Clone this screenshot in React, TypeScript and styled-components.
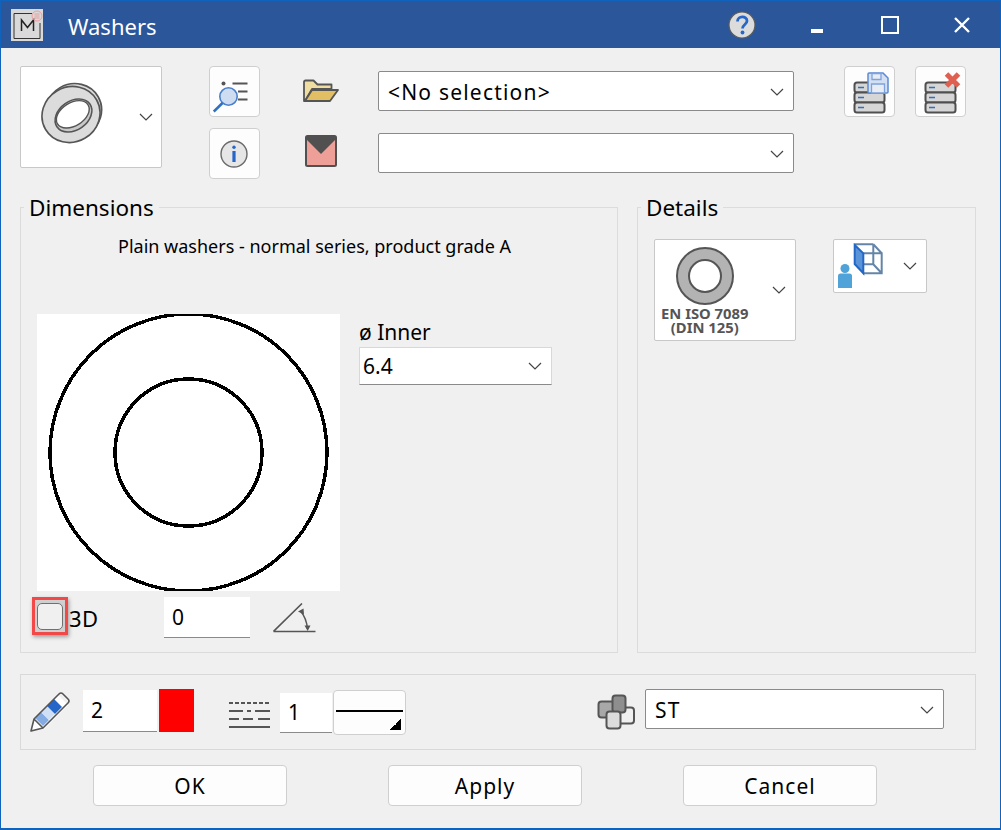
import styled, { createGlobalStyle } from "styled-components";

const GlobalStyle = createGlobalStyle`
  * {
    box-sizing: border-box;
  }
  body {
    margin: 0;
    background: #ffffff;
    font-family: "Noto Sans", "Open Sans", sans-serif;
    color: #000000;
  }
`;

const Chevron = () => (
  <ChevronSvg viewBox="0 0 14 8" fill="none" stroke="#444444" strokeWidth="1.2">
    <path d="M1 1l6 6 6-6" />
  </ChevronSvg>
);

const WasherIcon = () => (
  <svg width="66" height="64" viewBox="0 0 66 64">
    <ellipse cx="33.500" cy="30" rx="28.500" ry="27" transform="rotate(-30 33.500 30)" fill="#dcdcdc" stroke="#555" strokeWidth="1.600" />
    <ellipse cx="31" cy="33.500" rx="29.500" ry="27.500" transform="rotate(-30 31 33.500)" fill="#dcdcdc" stroke="#555" strokeWidth="1.600" />
    <ellipse cx="33.500" cy="34.500" rx="20" ry="14.500" transform="rotate(-35 33.500 34.500)" fill="#c9c9c9" stroke="#555" strokeWidth="1.600" />
    <ellipse cx="32.800" cy="33.300" rx="18" ry="11.500" transform="rotate(-32 32.800 33.300)" fill="#ffffff" stroke="#555" strokeWidth="1.400" />
  </svg>
);

const SearchListIcon = () => (
  <svg width="44" height="44" viewBox="0 0 44 44">
    <circle cx="10.500" cy="13.500" r="2" fill="#555" />
    <path d="M19.500 13.500h15M25 21.500h9.500M25 29.500h9.500" stroke="#555" strokeWidth="2" />
    <circle cx="15.500" cy="26.500" r="8.700" fill="#cddcf1" stroke="#4a7fcb" strokeWidth="1.600" />
    <path d="M9.500 33L0.800 41.500" stroke="#2f6fc4" strokeWidth="2.600" />
  </svg>
);

const InfoIcon = () => (
  <svg width="30" height="30" viewBox="1 0 30 30">
    <circle cx="15" cy="15" r="13" fill="#e6e6e6" stroke="#6a6a6a" strokeWidth="1.400" />
    <rect x="13.300" y="6.500" width="3.400" height="3.400" rx="1.700" fill="#2566c8" />
    <rect x="13.400" y="12" width="3.200" height="11" fill="#2566c8" />
  </svg>
);

const FolderIcon = () => (
  <svg width="38" height="24" viewBox="0 0 38 24">
    <path d="M2 22V3q0-1.500 1.500-1.500h8l4 4h14V10H10L3 22z" fill="#f0dda0" stroke="#555" strokeWidth="1.800" strokeLinejoin="round" />
    <path d="M3 22l7-11h26l-8 11z" fill="#e2bf62" stroke="#555" strokeWidth="1.800" strokeLinejoin="round" />
  </svg>
);

const MailIcon = () => (
  <svg width="32" height="32" viewBox="0 0 32 32">
    <rect x="1" y="1" width="30" height="30" rx="1.500" fill="#ee9f98" stroke="#505050" strokeWidth="2" />
    <path d="M1 1h30v3L16 19 1 4z" fill="#505050" />
  </svg>
);

const StackBase = () => (
  <>
    <rect x="4.500" y="12.500" width="30" height="10" rx="2.500" fill="#d6d6d6" stroke="#4f4f4f" strokeWidth="2" />
    <rect x="4.500" y="22.500" width="30" height="10" rx="2.500" fill="#d6d6d6" stroke="#4f4f4f" strokeWidth="2" />
    <rect x="4.500" y="32.500" width="30" height="10" rx="2.500" fill="#d6d6d6" stroke="#4f4f4f" strokeWidth="2" />
    <path d="M8 17.500h6M8 27.500h6M8 37.500h6" stroke="#2f6fc4" strokeWidth="1.500" />
  </>
);

const DbSaveIcon = () => (
  <svg width="40" height="44" viewBox="0 0 40 44">
    <StackBase />
    <path d="M18 4a1 1 0 0 1 1-1h14l5 5v14a1 1 0 0 1-1 1H19a1 1 0 0 1-1-1z" fill="#d3e0f3" stroke="#5c8ad2" strokeWidth="1.500" />
    <path d="M22 3.500h9v6h-9zM21.500 14h13v9h-13z" fill="#e8edf5" stroke="#7ea3dc" strokeWidth="1.300" />
  </svg>
);

const DbDeleteIcon = () => (
  <svg width="40" height="44" viewBox="0 0 40 44">
    <StackBase />
    <path d="M25.500 4l12 12M37.500 4l-12 12" stroke="#df5f50" strokeWidth="5" />
  </svg>
);

const HelpIcon = () => (
  <svg width="28" height="28" viewBox="0 0 28 28">
    <circle cx="14" cy="14" r="13" fill="#dcdcdc" stroke="#5a5a5a" strokeWidth="1.200" />
    <path d="M9.500 10.500c0-6 9.500-6 9.500-.5 0 3.500-4.500 3.500-4.500 7.500" fill="none" stroke="#2566c8" strokeWidth="2.800" />
    <circle cx="14.500" cy="21.500" r="1.900" fill="#2566c8" />
  </svg>
);

const AppIcon = () => (
  <svg width="32" height="32" viewBox="0 0 32 32">
    <rect width="32" height="32" fill="#d9d9d9" />
    <path d="M3 4.500v25h26" fill="none" stroke="#333" strokeWidth="1" />
    <path d="M3 4.500h18M29 14v15.500" fill="none" stroke="#333" strokeWidth="1" />
    <path d="M10.500 22V11l6 7.500 6-7.500v11" fill="none" stroke="#222" strokeWidth="1.500" />
    <circle cx="26" cy="7" r="5" fill="none" stroke="#ee9c9c" strokeWidth="1" />
    <path d="M23.500 5h5M23.500 7h5M23.500 9h5" stroke="#ee8f8f" strokeWidth="0.800" />
  </svg>
);

const FlatWasherIcon = () => (
  <svg width="60" height="60" viewBox="0 0 60 60">
    <circle cx="30" cy="30" r="28" fill="#b3b3b3" stroke="#555" strokeWidth="2" />
    <circle cx="30" cy="30" r="16" fill="#ffffff" stroke="#555" strokeWidth="2" />
  </svg>
);

const ViewCubeIcon = () => (
  <svg width="46" height="46" viewBox="0 0 46 46">
    <path d="M35.300 1.300H16.700M35.300 1.300v20H16.700M35.300 1.300l8.400 9M35.300 21.300l8.400 9M25.300 10.300h18.400v20H25.300" fill="none" stroke="#6585a8" strokeWidth="2" />
    <path d="M16.700 2l8.600 8.300v20L16.700 21z" fill="#5b93d8" stroke="#2266c6" strokeWidth="2" />
    <circle cx="7" cy="25.500" r="4.500" fill="#4fa3d8" />
    <path d="M0 45V33q0-2.500 2.500-2.500h9q2.500 0 2.500 2.500v12z" fill="#4fa3d8" />
  </svg>
);

const AngleIcon = () => (
  <svg width="44" height="32" viewBox="0 0 44 32">
    <path d="M0.500 28.500L29 0.500M0.500 28.500h42" fill="none" stroke="#555" strokeWidth="1.600" />
    <path d="M27.500 8q6 7 7 18" fill="none" stroke="#555" strokeWidth="1.400" />
    <path d="M25 8.500l5.500-3 .5 6zM31.500 22.500h6l-2.800 5.500z" fill="#555" />
  </svg>
);

const PencilIcon = () => (
  <svg width="42" height="42" viewBox="0 0 42 42">
    <path d="M1 40l3-12L28 4l10 10-24 24z" fill="#ffffff" />
    <path d="M5 27l8 8 6-6-8-8z" fill="#84ace3" />
    <path d="M11 21l8 8 6-6-8-8z" fill="#cfdff5" />
    <path d="M17 15l8 8 7-7-8-8z" fill="#2566c8" />
    <path d="M1 40l3-12L29 3q2-2 4 0l5 5q2 2 0 4L13 37zM4 28l9 9" fill="none" stroke="#555" strokeWidth="1.600" strokeLinejoin="round" />
  </svg>
);

const LineTypesIcon = () => (
  <svg width="41" height="27" viewBox="0 0 41 27">
    <path d="M0 2h41" stroke="#555" strokeWidth="2" strokeDasharray="4 2" />
    <path d="M0 10h14M18 10h4M26 10h15" stroke="#555" strokeWidth="2" />
    <path d="M0 18h10M14 18h10M29 18h12" stroke="#555" strokeWidth="2" />
    <path d="M0 26h41" stroke="#555" strokeWidth="2" />
  </svg>
);

const LayersIcon = () => (
  <svg width="40" height="36" viewBox="0 0 40 36">
    <rect x="1.500" y="7.500" width="22" height="16" rx="3" fill="#a8a8a8" stroke="#555" strokeWidth="2" />
    <rect x="17" y="13.500" width="20" height="16" rx="3" fill="#f0f0f0" stroke="#555" strokeWidth="2" />
    <rect x="15.500" y="1.500" width="13" height="17" rx="3" fill="#8e8e8e" stroke="#555" strokeWidth="2" />
    <rect x="9.500" y="17.500" width="14" height="17" rx="3" fill="#dcdcdc" stroke="#555" strokeWidth="2" />
  </svg>
);

export default function App() {
  return (
    <>
      <GlobalStyle />
      <Frame>
        <TitleBar>
          <AppIcon />
          <Title>Washers</Title>
          <TitleActions>
            <HelpIcon />
            <MinimizeGlyph />
            <MaximizeGlyph />
            <CloseGlyph viewBox="0 0 16 16" stroke="#ffffff" strokeWidth="2.400">
              <path d="M1 1l14 14M15 1L1 15" />
            </CloseGlyph>
          </TitleActions>
        </TitleBar>

        <Content>
          <TopRow>
            <ShapeButton>
              <WasherIcon />
              <Chevron />
            </ShapeButton>
            <ToolColumn>
              <ToolButton><SearchListIcon /></ToolButton>
              <ToolButton><InfoIcon /></ToolButton>
            </ToolColumn>
            <GlyphColumn>
              <FolderIcon />
              <MailIcon />
            </GlyphColumn>
            <SelectColumn>
              <ComboBox $width={416}>
                &lt;No selection&gt;
                <Chevron />
              </ComboBox>
              <ComboBox $width={416}>
                <Chevron />
              </ComboBox>
            </SelectColumn>
            <DbButtons>
              <ToolButton><DbSaveIcon /></ToolButton>
              <ToolButton><DbDeleteIcon /></ToolButton>
            </DbButtons>
          </TopRow>

          <GroupRow>
            <Group>
              <Legend>Dimensions</Legend>
              <Description>Plain washers - normal series, product grade A</Description>
              <DrawingRow>
                <Drawing viewBox="0 0 303 277" fill="none" stroke="#000000" strokeWidth="3.500" shapeRendering="crispEdges">
                  <circle cx="151.500" cy="138.500" r="138.500" />
                  <circle cx="151.500" cy="138.500" r="73.500" />
                </Drawing>
                <InnerField>
                  <FieldLabel>ø Inner</FieldLabel>
                  <SmallCombo>
                    6.4
                    <Chevron />
                  </SmallCombo>
                </InnerField>
              </DrawingRow>
              <OptionsRow>
                <Highlight>
                  <CheckBox />
                </Highlight>
                <CheckLabel>3D</CheckLabel>
                <AngleInput>0</AngleInput>
                <AngleIcon />
              </OptionsRow>
            </Group>

            <Group>
              <Legend>Details</Legend>
              <DetailsRow>
                <NormButton>
                  <NormFigure>
                    <FlatWasherIcon />
                    <NormText>EN ISO 7089<br />(DIN 125)</NormText>
                  </NormFigure>
                  <Chevron />
                </NormButton>
                <ViewButton>
                  <ViewCubeIcon />
                  <Chevron />
                </ViewButton>
              </DetailsRow>
            </Group>
          </GroupRow>

          <AttributesBar>
            <PencilIcon />
            <PenInput>2</PenInput>
            <ColorSwatch />
            <LineTypesSlot><LineTypesIcon /></LineTypesSlot>
            <LineInput>1</LineInput>
            <LineStyleButton>
              <LineSample />
              <LineCorner />
            </LineStyleButton>
            <LayerSlot>
              <LayersIcon />
              <LayerCombo $width={299}>
                ST
                <Chevron />
              </LayerCombo>
            </LayerSlot>
          </AttributesBar>

          <ActionRow>
            <ActionButton>OK</ActionButton>
            <ActionButton>Apply</ActionButton>
            <ActionButton>Cancel</ActionButton>
          </ActionRow>
        </Content>
      </Frame>
    </>
  );
}

const Frame = styled.div`
  width: 1001px;
  height: 830px;
  background: #f0f0f0;
  border: solid #0f63bd;
  border-width: 1px 1px 2px 1px;
  display: flex;
  flex-direction: column;
  overflow: hidden;
`;

const TitleBar = styled.div`
  height: 47px;
  flex: none;
  background: #2b579a;
  display: flex;
  align-items: center;
  padding: 0 30px 0 10px;
`;

const Title = styled.div`
  margin: 2px 0 0 25px;
  color: #ffffff;
  font-size: 22px;
`;

const TitleActions = styled.div`
  margin-left: auto;
  display: flex;
  align-items: center;
`;

const MinimizeGlyph = styled.div`
  width: 12px;
  height: 4px;
  margin: 13px 0 0 55px;
  background: #ffffff;
`;

const MaximizeGlyph = styled.div`
  width: 18px;
  height: 18px;
  margin-left: 58px;
  border: 2px solid #ffffff;
`;

const CloseGlyph = styled.svg`
  width: 16px;
  height: 16px;
  margin-left: 55px;
`;

const Content = styled.div`
  flex: 1;
  display: flex;
  flex-direction: column;
  padding: 18px 0 0 19px;
`;

const TopRow = styled.div`
  display: flex;
  height: 113px;
`;

const ChevronSvg = styled.svg`
  width: 14px;
  height: 8px;
  flex: none;
`;

const ShapeButton = styled.div`
  width: 142px;
  height: 102px;
  background: #ffffff;
  border: 1px solid #c8c8c8;
  border-radius: 2px;
  display: flex;
  align-items: center;
  justify-content: space-between;
  padding: 0 8px 0 19px;

  svg:first-child {
    margin-bottom: 8px;
  }
`;

const ToolColumn = styled.div`
  margin-left: 47px;
  display: flex;
  flex-direction: column;
  gap: 11px;
`;

const ToolButton = styled.div`
  width: 51px;
  height: 51px;
  background: #fdfdfd;
  border: 1px solid #cfcfcf;
  border-radius: 4px;
  display: flex;
  align-items: center;
  justify-content: center;
`;

const GlyphColumn = styled.div`
  width: 38px;
  margin-left: 42px;
  padding-top: 13px;
  display: flex;
  flex-direction: column;
  align-items: center;
  gap: 32px;
`;

const SelectColumn = styled.div`
  margin-left: 38px;
  padding-top: 5px;
  display: flex;
  flex-direction: column;
  gap: 22px;
`;

const ComboBox = styled.div<{ $width: number }>`
  width: ${(p) => p.$width}px;
  height: 40px;
  background: #ffffff;
  border: 1px solid #8a8a8a;
  border-radius: 2px;
  display: flex;
  align-items: center;
  justify-content: space-between;
  padding: 1px 9px 0 9px;
  font-size: 21px;
  letter-spacing: 1.200px;

  svg:only-child {
    margin-left: auto;
  }
`;

const DbButtons = styled.div`
  margin-left: 50px;
  display: flex;
  gap: 20px;
  align-items: flex-start;
`;

const GroupRow = styled.div`
  margin-top: 28px;
  display: flex;
  gap: 19px;
`;

const Group = styled.div`
  position: relative;
  height: 446px;
  flex: none;
  width: 598px;
  border: 1px solid #dcdcdc;
  padding: 26px 0 0 16px;

  & + & {
    width: 339px;
  }
`;

const Legend = styled.div`
  position: absolute;
  top: -15px;
  left: 3px;
  padding: 0 5px;
  background: #f0f0f0;
  font-size: 22.500px;
  line-height: 30px;
`;

const Description = styled.div`
  width: 555px;
  text-align: center;
  font-size: 18px;
  line-height: 24px;
`;

const DrawingRow = styled.div`
  margin-top: 56px;
  display: flex;
  gap: 19px;
`;

const Drawing = styled.svg`
  width: 303px;
  height: 277px;
  background: #ffffff;
`;

const InnerField = styled.div`
  padding-top: 3px;
`;

const FieldLabel = styled.div`
  font-size: 21px;
  line-height: 30px;
`;

const SmallCombo = styled.div`
  width: 193px;
  height: 38px;
  background: #ffffff;
  border: 1px solid #d8d8d8;
  border-bottom-color: #8a8a8a;
  display: flex;
  align-items: center;
  justify-content: space-between;
  padding: 0 9px 0 3px;
  font-size: 21px;
`;

const OptionsRow = styled.div`
  margin-top: 6px;
  display: flex;
  align-items: flex-start;
`;

const Highlight = styled.div`
  width: 36px;
  height: 38px;
  margin-left: -5px;
  background: #cfcfcf;
  border: 3px solid #f34848;
  box-shadow: 1px 2px 4px rgba(0, 0, 0, 0.35);
  display: flex;
  align-items: center;
  justify-content: center;
`;

const CheckBox = styled.div`
  width: 26px;
  height: 27px;
  background: #f0f0f0;
  border: 1.500px solid #707070;
  border-radius: 5px;
`;

const CheckLabel = styled.div`
  margin: 6px 0 0 1px;
  width: 95px;
  font-size: 22px;
  letter-spacing: 0.500px;
  line-height: 30px;
`;

const AngleInput = styled.div`
  width: 86px;
  height: 41px;
  background: #ffffff;
  border-bottom: 1px solid #8a8a8a;
  padding: 0 8px;
  font-size: 21px;
  line-height: 40px;
  margin-right: 23px;

  & + svg {
    margin-top: 6px;
  }
`;

const DetailsRow = styled.div`
  margin-top: 5px;
  display: flex;
  align-items: flex-start;
  gap: 37px;
`;

const NormButton = styled.div`
  width: 142px;
  height: 102px;
  background: #ffffff;
  border: 1px solid #c8c8c8;
  border-radius: 2px;
  display: flex;
  align-items: center;
  padding: 0 9px 0 6px;
  justify-content: space-between;
`;

const NormFigure = styled.div`
  display: flex;
  flex-direction: column;
  align-items: center;
`;

const NormText = styled.div`
  color: #555555;
  font-size: 14.800px;
  font-weight: 700;
  line-height: 14px;
  text-align: center;
`;

const ViewButton = styled.div`
  width: 94px;
  height: 54px;
  background: #ffffff;
  border: 1px solid #c8c8c8;
  border-radius: 2px;
  display: flex;
  align-items: center;
  justify-content: space-between;
  padding: 0 9px 0 4px;
`;

const AttributesBar = styled.div`
  margin-top: 21px;
  width: 956px;
  height: 76px;
  border: 1px solid #d9d9d9;
  display: flex;
  align-items: center;
  padding-left: 9px;
`;

const PenInput = styled.div`
  width: 74px;
  height: 42px;
  margin: -2px 0 0 11px;
  background: #ffffff;
  border-bottom: 1px solid #8a8a8a;
  padding: 0 8px;
  font-size: 21px;
  line-height: 40px;
`;

const ColorSwatch = styled.div`
  width: 35px;
  height: 43px;
  margin: -3px 0 0 2px;
  background: #ff0000;
`;

const LineTypesSlot = styled.div`
  margin: 5px 0 0 35px;
  display: flex;
`;

const LineInput = styled.div`
  width: 52px;
  height: 40px;
  margin: 2px 0 0 10px;
  background: #ffffff;
  border-bottom: 1px solid #8a8a8a;
  padding: 0 8px;
  font-size: 21px;
  line-height: 39px;
`;

const LineStyleButton = styled.div`
  position: relative;
  width: 73px;
  height: 45px;
  margin-left: 1px;
  background: #fdfdfd;
  border: 1px solid #cfcfcf;
  border-radius: 4px;
  display: flex;
  align-items: center;
  padding: 0 2px;
`;

const LineSample = styled.div`
  width: 100%;
  height: 2px;
  background: #000000;
  margin-top: -2px;
`;

const LineCorner = styled.div`
  position: absolute;
  right: 4px;
  bottom: 4px;
  width: 11px;
  height: 11px;
  background: linear-gradient(135deg, transparent 50%, #000000 50%);
`;

const LayerSlot = styled.div`
  margin-left: 191px;
  display: flex;
  align-items: center;
  gap: 8px;
`;

const LayerCombo = styled(ComboBox)`
  margin-top: -6px;
`;

const ActionRow = styled.div`
  margin: 15px 0 0 73px;
  display: flex;
  gap: 101px;
`;

const ActionButton = styled.div`
  width: 194px;
  height: 41px;
  background: #fdfdfd;
  border: 1px solid #cfcfcf;
  border-radius: 4px;
  display: flex;
  align-items: center;
  justify-content: center;
  font-size: 21px;
  letter-spacing: 1px;
`;
